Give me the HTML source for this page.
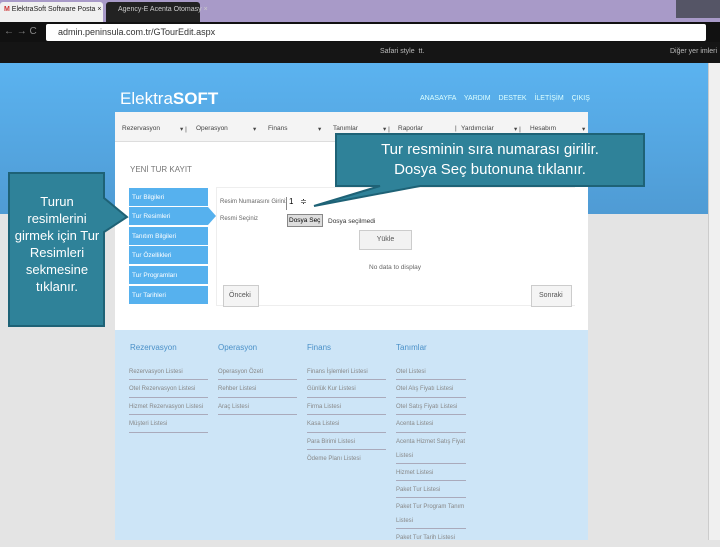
<!DOCTYPE html>
<html><head><meta charset="utf-8"><style>
*{margin:0;padding:0;box-sizing:border-box}
body{width:720px;height:540px;overflow:hidden;font-family:"Liberation Sans",sans-serif;background:#e4e4e4;position:relative}
.a{position:absolute;white-space:nowrap}
.t{font-size:7px;color:#666}
.l div{border-bottom:1px solid #aab;height:17.4px;line-height:18px;font-size:6px;color:#888;white-space:nowrap}
.l div.d{height:31px;line-height:14px;padding-top:2px;white-space:normal}
.m{position:absolute;top:125px;font-size:6.5px;color:#444}
</style></head><body>
<div class="a" style="left:0;top:0;width:720px;height:22px;background:#a89ac8"></div>
<div class="a" style="left:0;top:2px;width:103px;height:20px;background:#f0f0f0;border-radius:3px 3px 0 0"></div>
<div class="a t" style="left:4px;top:6px;color:#222;font-size:7px"><span style="color:#c33;font-weight:bold">M</span> ElektraSoft Software Posta ×</div>
<div class="a" style="left:106px;top:2px;width:94px;height:20px;background:#222;border-radius:3px 3px 0 0"></div>
<div class="a t" style="left:118px;top:6px;color:#ccc;font-size:7px">Agency-E Acenta Otomasy ×</div>
<div class="a" style="left:676px;top:0;width:44px;height:18px;background:#556"></div>
<div class="a" style="left:0;top:22px;width:720px;height:20px;background:#111"></div>
<div class="a" style="left:46px;top:24px;width:660px;height:17px;background:#fff;border-radius:2px"></div>
<div class="a" style="left:58px;top:27px;font-size:9px;color:#333">admin.peninsula.com.tr/GTourEdit.aspx</div>
<div class="a t" style="left:4px;top:26px;color:#888;font-size:10px">← → C</div>
<div class="a" style="left:0;top:42px;width:720px;height:21px;background:#151515"></div>
<div class="a t" style="left:380px;top:48px;color:#bbb">Safari style &nbsp;tt.</div>
<div class="a t" style="left:670px;top:48px;color:#bbb">Diğer yer imleri</div>
<div class="a" style="left:0;top:63px;width:708px;height:151px;background:linear-gradient(#5bb3f0,#4f9bd4)"></div>
<div class="a" style="left:708px;top:63px;width:12px;height:477px;background:#f0f0f0;border-left:1px solid #ccc"></div>
<div class="a" style="left:120px;top:89px;font-size:17px;color:#fff">Elektra<b>SOFT</b></div>
<div class="a" style="left:420px;top:95px;font-size:7px;color:#dff;word-spacing:6px">ANASAYFA YARDIM DESTEK İLETİŞİM ÇIKIŞ</div>
<div class="a" style="left:115px;top:112px;width:473px;height:218px;background:#fff"></div>
<div class="a" style="left:115px;top:112px;width:473px;height:30px;background:#f4f4f4;border-bottom:1px solid #ddd"></div>
<div class="m" style="left:122px">Rezervasyon</div><div class="m" style="left:180px">▾ |</div>
<div class="m" style="left:196px">Operasyon</div><div class="m" style="left:253px">▾</div>
<div class="m" style="left:268px">Finans</div><div class="m" style="left:318px">▾</div>
<div class="m" style="left:333px">Tanımlar</div><div class="m" style="left:383px">▾ |</div>
<div class="m" style="left:398px">Raporlar</div><div class="m" style="left:455px">|</div>
<div class="m" style="left:461px">Yardımcılar</div><div class="m" style="left:514px">▾ |</div>
<div class="m" style="left:530px">Hesabım</div><div class="m" style="left:582px">▾</div>
<div class="a t" style="left:130px;top:165px;color:#777;font-size:8px">YENİ TUR KAYIT</div>
<div class="a" style="left:216px;top:187px;width:359px;height:119px;border:1px solid #eee;border-right:none"></div>
<div class="a" style="left:129px;top:188px;width:79px;height:18px;background:#56b1ee"></div>
<div class="a" style="left:129px;top:207px;width:79px;height:18px;background:#56b1ee"></div>
<div class="a" style="left:208px;top:207px;width:0;height:0;border-top:9px solid transparent;border-bottom:9px solid transparent;border-left:8px solid #56b1ee"></div>
<div class="a" style="left:129px;top:227px;width:79px;height:18px;background:#56b1ee"></div>
<div class="a" style="left:129px;top:246px;width:79px;height:18px;background:#56b1ee"></div>
<div class="a" style="left:129px;top:266px;width:79px;height:18px;background:#56b1ee"></div>
<div class="a" style="left:129px;top:286px;width:79px;height:18px;background:#56b1ee"></div>
<div class="a t" style="left:132px;top:194px;color:#fff;font-size:6.5px">Tur Bilgileri</div>
<div class="a t" style="left:132px;top:213px;color:#fff;font-size:6.5px">Tur Resimleri</div>
<div class="a t" style="left:132px;top:233px;color:#fff;font-size:6.5px">Tanıtım Bilgileri</div>
<div class="a t" style="left:132px;top:252px;color:#fff;font-size:6.5px">Tur Özellikleri</div>
<div class="a t" style="left:132px;top:272px;color:#fff;font-size:6.5px">Tur Programları</div>
<div class="a t" style="left:132px;top:292px;color:#fff;font-size:6.5px">Tur Tarihleri</div>
<div class="a t" style="left:220px;top:199px;font-size:6px">Resim Numarasını Giriniz</div>
<div class="a" style="left:286px;top:197px;width:30px;height:13px;border-left:1px solid #888;font-size:8px;padding-left:2px;background:#fff">1 &nbsp; ≑</div>
<div class="a t" style="left:220px;top:216px;font-size:6px">Resmi Seçiniz</div>
<div class="a" style="left:287px;top:214px;width:36px;height:13px;background:#ddd;border:1px solid #888;font-size:6.5px;padding:2px 1px;line-height:8px">Dosya Seç</div>
<div class="a t" style="left:328px;top:218px;color:#333;font-size:6.5px">Dosya seçilmedi</div>
<div class="a" style="left:359px;top:230px;width:53px;height:20px;background:#f2f2f2;border:1px solid #ccc;font-size:7px;text-align:center;line-height:18px;color:#555">Yükle</div>
<div class="a t" style="left:369px;top:264px;font-size:6.5px">No data to display</div>
<div class="a" style="left:223px;top:285px;width:36px;height:22px;background:#f4f4f4;border:1px solid #ccc;font-size:7px;line-height:20px;padding-left:5px;color:#555">Önceki</div>
<div class="a" style="left:531px;top:285px;width:41px;height:22px;background:#f4f4f4;border:1px solid #ccc;font-size:7px;line-height:20px;padding-left:7px;color:#555">Sonraki</div>
<div class="a" style="left:115px;top:330px;width:473px;height:210px;background:#cde5f7"></div>
<div class="a" style="left:130px;top:343px;font-size:8px;color:#4a90c8">Rezervasyon</div>
<div class="a" style="left:218px;top:343px;font-size:8px;color:#4a90c8">Operasyon</div>
<div class="a" style="left:307px;top:343px;font-size:8px;color:#4a90c8">Finans</div>
<div class="a" style="left:396px;top:343px;font-size:8px;color:#4a90c8">Tanımlar</div>
<div class="a l" style="left:129px;top:363px;width:79px">
<div>Rezervasyon Listesi</div><div>Otel Rezervasyon Listesi</div><div>Hizmet Rezervasyon Listesi</div><div>Müşteri Listesi</div></div>
<div class="a l" style="left:218px;top:363px;width:79px">
<div>Operasyon Özeti</div><div>Rehber Listesi</div><div>Araç Listesi</div></div>
<div class="a l" style="left:307px;top:363px;width:79px">
<div>Finans İşlemleri Listesi</div><div>Günlük Kur Listesi</div><div>Firma Listesi</div><div>Kasa Listesi</div><div>Para Birimi Listesi</div><div style="border:none">Ödeme Planı Listesi</div></div>
<div class="a l" style="left:396px;top:363px;width:70px">
<div>Otel Listesi</div><div>Otel Alış Fiyatı Listesi</div><div>Otel Satış Fiyatı Listesi</div><div>Acenta Listesi</div><div class="d">Acenta Hizmet Satış Fiyat<br>Listesi</div><div>Hizmet Listesi</div><div>Paket Tur Listesi</div><div class="d">Paket Tur Program Tanım<br>Listesi</div><div style="border:none">Paket Tur Tarih Listesi</div></div>
<svg class="a" style="left:0;top:0" width="720" height="540">
<polygon points="9,173 104,173 104,198 127,217 104,232 104,326 9,326" fill="#2f8299" stroke="#1e6276" stroke-width="2"/>
<polygon points="336,134 644,134 644,186 420,186 314,206 380,186 336,186" fill="#2f8299" stroke="#1e6276" stroke-width="2"/>
</svg>
<div class="a" style="left:12px;top:193px;width:90px;text-align:center;color:#fff;font-size:13px;line-height:17px;white-space:normal">Turun resimlerini girmek için Tur Resimleri sekmesine tıklanır.</div>
<div class="a" style="left:336px;top:140px;width:308px;text-align:center;color:#fff;font-size:15px;line-height:20px">Tur resminin sıra numarası girilir.<br>Dosya Seç butonuna tıklanır.</div>
</body></html>
